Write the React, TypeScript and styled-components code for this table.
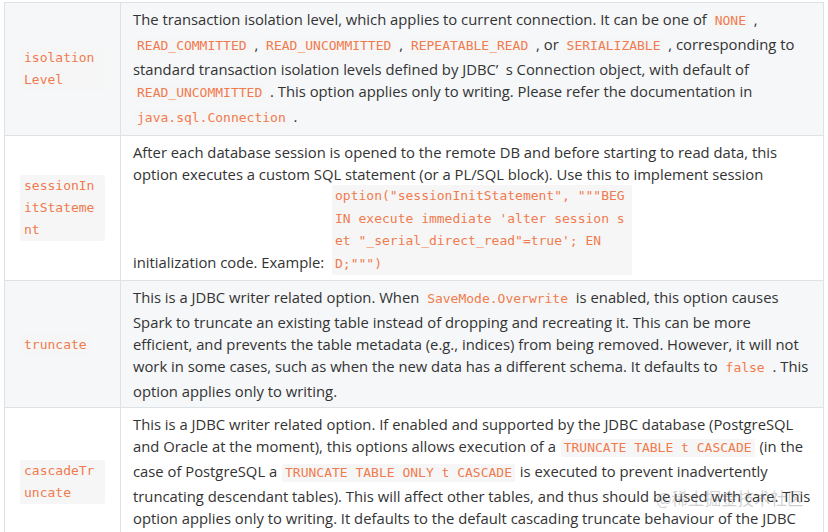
import styled, {createGlobalStyle} from "styled-components";

const GlobalStyle = createGlobalStyle`
  body {
    margin: 0;
    background: #fff;
    font-family: "Open Sans", "Noto Sans", sans-serif;
  }
`;

const Page = styled.div`
  position: relative;
  width: 828px;
  height: 532px;
  overflow: hidden;
  padding: 2px 0 0 4px;
  box-sizing: border-box;
`;

const Table = styled.table`
  width: 820px;
  border-collapse: collapse;
  table-layout: fixed;
  font-size: 14.8px;
  line-height: 22px;
  color: #333;
`;

const Row = styled.tr<{ $shade?: boolean }>`
  background: ${p => (p.$shade ? "#f6f7f9" : "#fff")};
`;

const NameCell = styled.td`
  width: 85px;
  border: 1px solid #dfe2e5;
  padding: 5px 15px;
  vertical-align: middle;
`;

const TextCell = styled.td`
  border: 1px solid #dfe2e5;
  padding: 5px 12px;
  vertical-align: middle;
`;

const Code = styled.code`
  display: inline-block;
  font-family: "DejaVu Sans Mono", monospace;
  font-size: 13px;
  line-height: 18px;
  color: #ef7b4e;
  background: #f7f6f6;
  padding: 0 3px;
  margin: 3px 1px;
  border-radius: 2px;
`;

const NameCode = styled(Code)`
  margin: 0;
  padding: 0 4px;
  line-height: 22px;
  word-break: break-all;
`;

const CodeBlock = styled(Code)`
  width: 294px;
  padding: 0 3px;
  margin: 0 0 0 4px;
  line-height: 22.5px;
  word-break: break-all;
  white-space: pre-wrap;
`;

const Watermark = styled.div`
  position: absolute;
  left: 656px;
  top: 486px;
  font-family: "Noto Sans CJK SC", sans-serif;
  font-size: 16.5px;
  color: rgba(120, 120, 120, 0.35);
  pointer-events: none;
`;

export default function App() {
    return <>
        <GlobalStyle/>
        <Page>
            <Table>
                <tbody>
                <Row $shade>
                    <NameCell><NameCode>isolationLevel</NameCode></NameCell>
                    <TextCell>
                        The transaction isolation level, which applies to current connection. It can be one of <Code>NONE</Code> , <Code>READ_COMMITTED</Code> , <Code>READ_UNCOMMITTED</Code> , <Code>REPEATABLE_READ</Code> , or <Code>SERIALIZABLE</Code> , corresponding to standard transaction isolation levels defined by JDBC’&ensp;s Connection object, with default of <Code>READ_UNCOMMITTED</Code> . This option applies only to writing. Please refer the documentation in <Code>java.sql.Connection</Code> .
                    </TextCell>
                </Row>
                <Row>
                    <NameCell><NameCode>sessionInitStatement</NameCode></NameCell>
                    <TextCell>
                        After each database session is opened to the remote DB and before starting to read data, this option executes a custom SQL statement (or a PL/SQL block). Use this to implement session initialization code. Example: <CodeBlock>{`option("sessionInitStatement", """BEGIN execute immediate 'alter session set "_serial_direct_read"=true'; END;""")`}</CodeBlock>
                    </TextCell>
                </Row>
                <Row $shade>
                    <NameCell><NameCode>truncate</NameCode></NameCell>
                    <TextCell>
                        This is a JDBC writer related option. When <Code>SaveMode.Overwrite</Code> is enabled, this option causes Spark to truncate an existing table instead of dropping and recreating it. This can be more efficient, and prevents the table metadata (e.g., indices) from being removed. However, it will not work in some cases, such as when the new data has a different schema. It defaults to <Code>false</Code> . This option applies only to writing.
                    </TextCell>
                </Row>
                <Row>
                    <NameCell><NameCode>cascadeTruncate</NameCode></NameCell>
                    <TextCell>
                        This is a JDBC writer related option. If enabled and supported by the JDBC database (PostgreSQL and Oracle at the moment), this options allows execution of a <Code>TRUNCATE TABLE t CASCADE</Code> (in the case of PostgreSQL a <Code>TRUNCATE TABLE ONLY t CASCADE</Code> is executed to prevent inadvertently truncating descendant tables). This will affect other tables, and thus should be used with care. This option applies only to writing. It defaults to the default cascading truncate behaviour of the JDBC database in question, specified in the isCascadeTruncate in each JDBCDialect.
                    </TextCell>
                </Row>
                </tbody>
            </Table>
            <Watermark>@稀土掘金技术社区</Watermark>
        </Page>
    </>;
}
